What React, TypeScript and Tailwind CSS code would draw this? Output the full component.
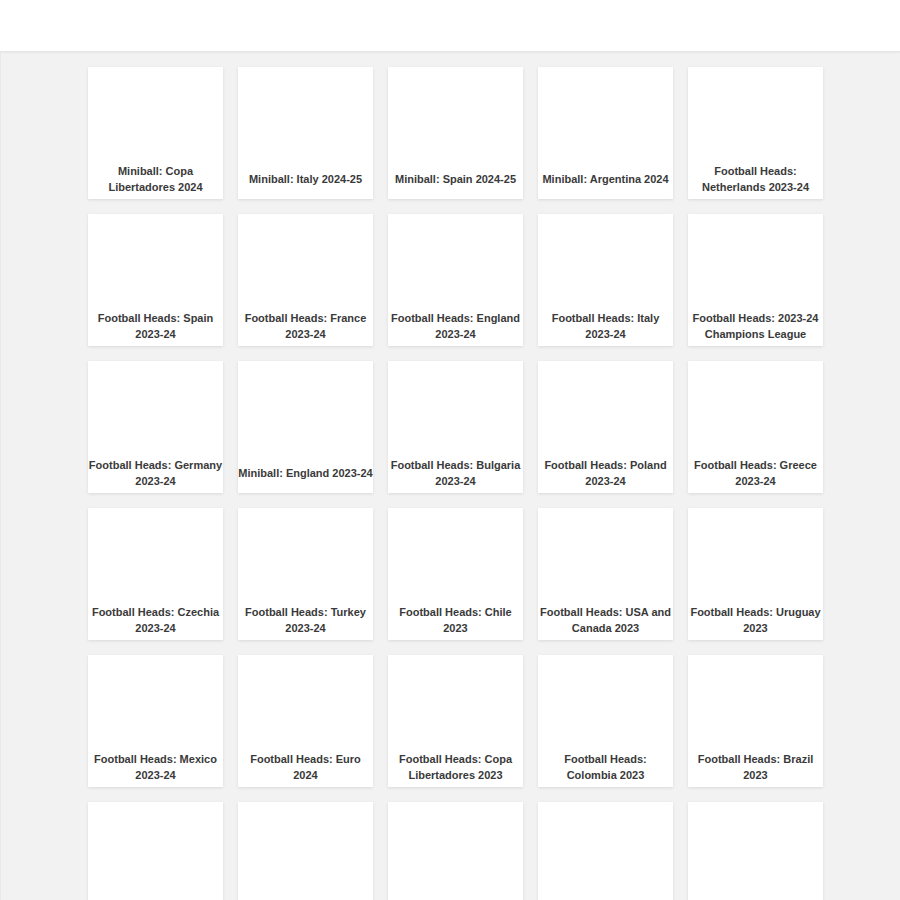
import React from "react";

const games = [
  "Miniball: Copa Libertadores 2024",
  "Miniball: Italy 2024-25",
  "Miniball: Spain 2024-25",
  "Miniball: Argentina 2024",
  "Football Heads: Netherlands 2023-24",
  "Football Heads: Spain 2023-24",
  "Football Heads: France 2023-24",
  "Football Heads: England 2023-24",
  "Football Heads: Italy 2023-24",
  "Football Heads: 2023-24 Champions League",
  "Football Heads: Germany 2023-24",
  "Miniball: England 2023-24",
  "Football Heads: Bulgaria 2023-24",
  "Football Heads: Poland 2023-24",
  "Football Heads: Greece 2023-24",
  "Football Heads: Czechia 2023-24",
  "Football Heads: Turkey 2023-24",
  "Football Heads: Chile 2023",
  "Football Heads: USA and Canada 2023",
  "Football Heads: Uruguay 2023",
  "Football Heads: Mexico 2023-24",
  "Football Heads: Euro 2024",
  "Football Heads: Copa Libertadores 2023",
  "Football Heads: Colombia 2023",
  "Football Heads: Brazil 2023",
  "",
  "",
  "",
  "",
  "",
];

const GameCard = ({ title }: { title: string }) => (
  <div className="flex flex-col h-[132px] bg-white shadow-[0_1px_3px_rgba(0,0,0,0.1)]">
    {/* thumbnail area (empty) */}
    <div className="h-[92px]" />
    <div className="flex items-center justify-center h-[40px] text-center text-[11px] leading-[16px] font-bold text-[#3a3a3a]">
      {title}
    </div>
  </div>
);

export default function App() {
  return (
    <div
      className="min-h-[900px] bg-[#f2f2f2]"
      style={{ fontFamily: '"Liberation Sans", Arial, sans-serif' }}
    >
      <header className="h-[52px] bg-white border-b border-[#e6e6e6] shadow-[0_1px_2px_rgba(0,0,0,0.05)]" />
      <main className="pt-[15px] pl-[87px] border-l border-[#e8e8e8]">
        <div className="grid grid-cols-[repeat(5,135px)] gap-[15px]">
          {games.map((title, i) => (
            <GameCard key={i} title={title} />
          ))}
        </div>
      </main>
    </div>
  );
}
